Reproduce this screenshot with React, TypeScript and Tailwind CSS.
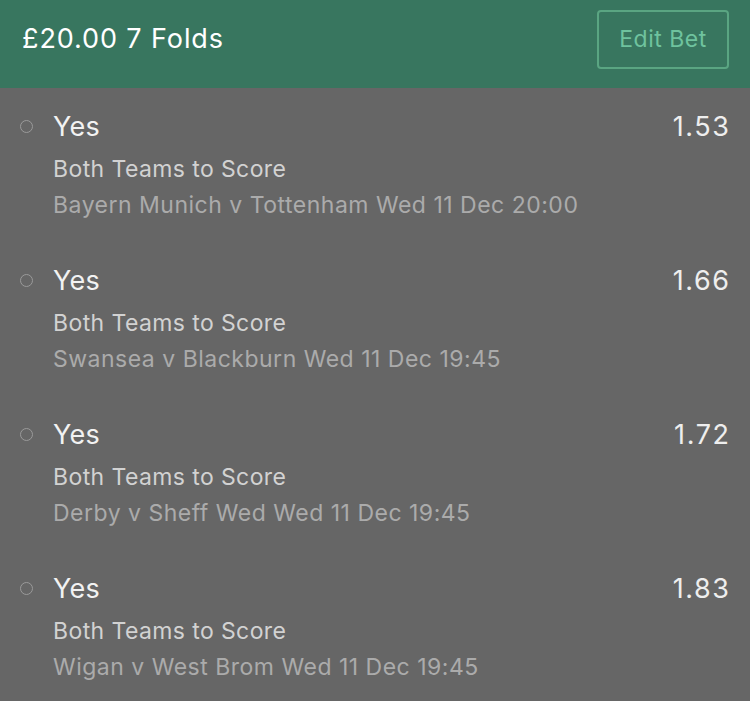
import React from "react";

const bets = [
  { odds: "1.53", event: "Bayern Munich v Tottenham Wed 11 Dec 20:00" },
  { odds: "1.66", event: "Swansea v Blackburn Wed 11 Dec 19:45" },
  { odds: "1.72", event: "Derby v Sheff Wed Wed 11 Dec 19:45" },
  { odds: "1.83", event: "Wigan v West Brom Wed 11 Dec 19:45" },
];

export default function App() {
  return (
    <div className="w-[750px] h-[701px] bg-[#666666] overflow-hidden" style={{ fontFamily: "Inter, 'Noto Sans', sans-serif" }}>
      <div className="h-[88px] bg-[#38765f] flex items-center justify-between pl-[22px] pr-[21px] pb-[10px]">
        <div className="text-[27px] text-white font-normal tracking-[0.9px]">£20.00 7 Folds</div>
        <div className="w-[132px] h-[59px] border-2 border-[#5aa582] rounded-[4px] flex items-center justify-center text-[23px] text-[#6fc39e] tracking-[0.5px]">
          Edit Bet
        </div>
      </div>
      <div className="flex flex-col">
        {bets.map((b) => (
          <div key={b.odds} className="flex pt-[19px] pb-[19px] pr-[21px]">
            <div className="w-[53px] flex justify-center pt-[13px] pl-[2px]">
              <div className="w-[13px] h-[13px] rounded-full border-[1.5px] border-[#9a9a9a] ml-[-2px]" />
            </div>
            <div className="flex-1 flex flex-col">
              <div className="flex justify-between items-center h-[40px]">
                <span className="text-[27px] text-[#f2f2f2] tracking-[0.3px]">Yes</span>
                <span className="text-[27px] text-[#eeeeee] tracking-[1.6px] mr-[-1.6px]">{b.odds}</span>
              </div>
              <div className="mt-[4px] h-[36px] flex items-center text-[23px] text-[#d2d2d2] tracking-[0.4px]">Both Teams to Score</div>
              <div className="h-[36px] flex items-center text-[23px] text-[#ababab] tracking-[0.5px]">{b.event}</div>
            </div>
          </div>
        ))}
      </div>
    </div>
  );
}
